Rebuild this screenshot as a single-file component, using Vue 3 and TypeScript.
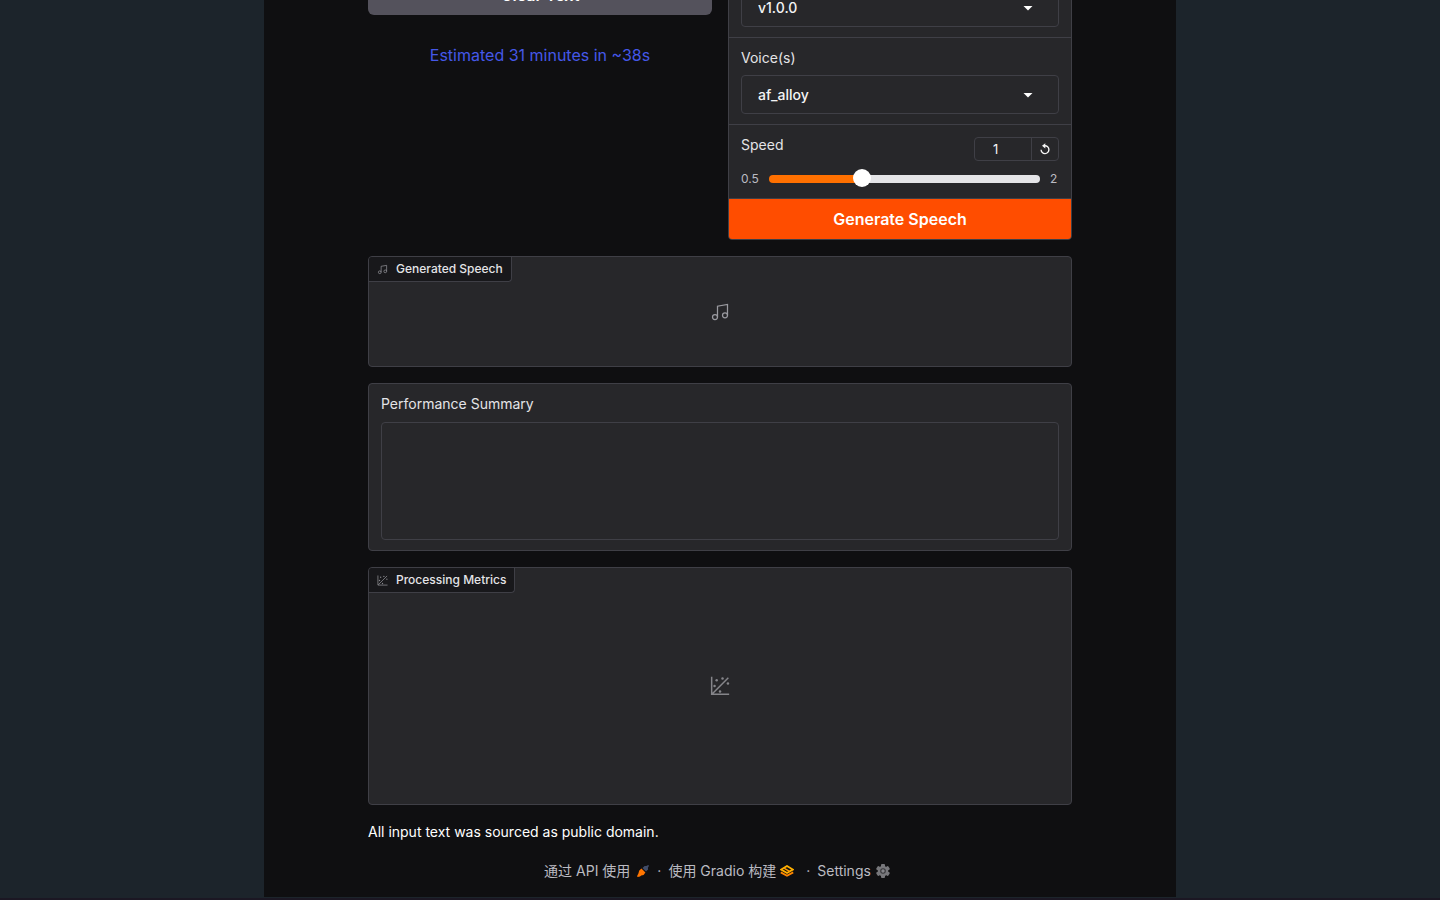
<script setup lang="ts">
import { computed, ref } from 'vue'

const model = ref('v1.0.0')
const voice = ref('af_alloy')
const speed = ref(1)
const summary = ref('')
const minSpeed = 0.5
const maxSpeed = 2

const fill = computed(() => {
  const ratio = (speed.value - minSpeed) / (maxSpeed - minSpeed)
  return `${(ratio * 100).toFixed(2)}%`
})

const plotDots = [
  [5.5, 12],
  [8, 5],
  [15, 3],
  [12, 18.5],
  [21.5, 9],
]
</script>

<template>
  <div class="page">
    <main class="app">
      <div class="content">
        <div class="columns">
          <section class="left">
            <button class="clear" type="button">Clear Text</button>
            <p class="estimate">Estimated 31 minutes in ~38s</p>
          </section>

          <section class="controls">
            <div class="field">
              <label for="model">Model Version</label>
              <div class="select-wrap">
                <select id="model" v-model="model">
                  <option>v1.0.0</option>
                </select>
                <svg class="caret" viewBox="0 0 18 18" aria-hidden="true"><path d="M4.500 7l4.500 4.500 4.500-4.500z" /></svg>
              </div>
            </div>
            <div class="field">
              <label for="voice">Voice(s)</label>
              <div class="select-wrap">
                <select id="voice" v-model="voice">
                  <option>af_alloy</option>
                </select>
                <svg class="caret" viewBox="0 0 18 18" aria-hidden="true"><path d="M4.500 7l4.500 4.500 4.500-4.500z" /></svg>
              </div>
            </div>
            <div class="field speed">
              <div class="speed-head">
                <label for="speed">Speed</label>
                <div class="number">
                  <input v-model.number="speed" type="number" aria-label="Speed value" min="0.5" max="2" step="0.1" />
                  <button type="button" aria-label="Reset speed" @click="speed = 1">
                    <svg viewBox="0 0 12 12" aria-hidden="true">
                      <path d="M5.8 2.800A3.900 3.900 0 1 1 2.100 6.700" fill="none" stroke="currentColor" stroke-width="1.400" />
                      <path d="M6.300.2v5.200L3 2.800z" fill="currentColor" />
                    </svg>
                  </button>
                </div>
              </div>
              <div class="range">
                <span>0.5</span>
                <input
                  id="speed"
                  v-model.number="speed"
                  type="range"
                  :min="minSpeed"
                  :max="maxSpeed"
                  step="0.1"
                  :style="{ '--fill': fill }"
                />
                <span>2</span>
              </div>
            </div>
            <button class="generate" type="button">Generate Speech</button>
          </section>
        </div>

        <section class="block audio">
          <h2 class="tag">
            <svg class="line-icon" viewBox="0 0 24 24" aria-hidden="true">
              <path d="M9 18V5l12-2v13" /><circle cx="6" cy="18" r="3" /><circle cx="18" cy="16" r="3" />
            </svg>
            Generated Speech
          </h2>
          <svg class="line-icon large" viewBox="0 0 24 24" aria-hidden="true">
            <path d="M9 18V5l12-2v13" /><circle cx="6" cy="18" r="3" /><circle cx="18" cy="16" r="3" />
          </svg>
        </section>

        <section class="block summary">
          <label for="summary">Performance Summary</label>
          <textarea id="summary" v-model="summary"></textarea>
        </section>

        <section class="block plot">
          <h2 class="tag">
            <svg class="plot-icon" viewBox="0 0 24 24" aria-hidden="true">
              <circle v-for="[x, y] in plotDots" :key="x" :cx="x" :cy="y" r="1.5" />
              <path d="M2 1v21h21M2.500 21.500L22 2" />
            </svg>
            Processing Metrics
          </h2>
          <svg class="plot-icon large" viewBox="0 0 24 24" aria-hidden="true">
            <circle v-for="[x, y] in plotDots" :key="x" :cx="x" :cy="y" r="1.5" />
            <path d="M2 1v21h21M2.500 21.500L22 2" />
          </svg>
        </section>

        <p class="note">All input text was sourced as public domain.</p>
      </div>

      <footer>
        <button type="button">
          通过 API 使用
          <svg class="rocket" viewBox="0 0 12 12" aria-hidden="true">
            <path d="M5.500 3L7.600.9l1.700.2L11.200 0l.8.800-1.100 1.900.2 1.700-2.100 2.100z" fill="#414c68" />
            <path d="M4.400 3.600l4 4-1.800 2.400-2.400.6-1.200.8-2.200.6L0 11.200l1-2 .5-1 .6-2.400z" fill="#ff7500" />
          </svg>
        </button>
        <span class="dot">·</span>
        <a href="#">
          使用 Gradio 构建
          <svg class="gradio" viewBox="0 0 14 12" aria-hidden="true">
            <path d="M.8 7.400L7 10.800l6.200-3.400" fill="none" stroke="#ff8500" stroke-width="1.800" />
            <path d="M7 1L12.800 4.600 7 8 1.200 4.600z" fill="none" stroke="#ffb000" stroke-width="1.800" />
            <path d="M4 3.200l5.500 3.200" fill="none" stroke="#ff9800" stroke-width="1.500" />
          </svg>
        </a>
        <span class="dot wide">·</span>
        <button type="button">
          Settings
          <svg class="gear" viewBox="0 0 14 14" aria-hidden="true">
            <g fill="#77777b">
              <rect v-for="a in [0, 60, 120]" :key="a" x="5" y="0" width="4" height="14" rx="1" :transform="`rotate(${a} 7 7)`" />
            </g>
            <circle cx="7" cy="7" r="4" fill="none" stroke="#77777b" stroke-width="2.500" />
            <circle cx="7" cy="7" r="2.800" fill="#37373b" /><circle cx="7" cy="7" r="1.700" fill="#85858a" />
          </svg>
        </button>
      </footer>
    </main>
  </div>
</template>

<style>
body {
  margin: 0;
  background: #1c242b;
}
</style>

<style scoped>
* {
  box-sizing: border-box;
}
.page {
  height: 100vh;
  overflow: hidden;
  display: flex;
  flex-direction: column;
  justify-content: flex-end;
  padding-bottom: 1px;
  border-bottom: 2px solid #1b1723;
  background: #1c242b;
  color: #f4f4f5;
  font: 14px/20px Inter, "Noto Sans CJK SC", sans-serif;
}
.app {
  flex: none;
  width: 100%;
  max-width: 912px;
  margin: 0 auto;
  padding: 0 104px 16px;
  background: #0f0f11;
}
.content {
  display: flex;
  flex-direction: column;
  gap: 16px;
}
button,
input,
select,
textarea {
  font: inherit;
  color: inherit;
  margin: 0;
}
button {
  cursor: pointer;
}
p,
h2 {
  margin: 0;
}
.columns {
  display: grid;
  grid-template-columns: 1fr 1fr;
  gap: 16px;
}
.left {
  display: flex;
  flex-direction: column;
  gap: 28px;
  padding-top: 25px;
}
.clear {
  height: 40px;
  border: 0;
  border-radius: 6px;
  background: #54525c;
  color: #fff;
  font-size: 16px;
  font-weight: 600;
}
.estimate {
  text-align: center;
  font-size: 16px;
  line-height: 24px;
  color: #4558e8;
}
.controls {
  display: flex;
  flex-direction: column;
  gap: 1px;
  overflow: hidden;
  border: 1px solid #3f3f46;
  border-radius: 4px;
  background: #3f3f46;
}
.field {
  padding: 10px 12px;
  background: #27272a;
}
.field label,
.summary label {
  display: block;
  color: #e4e4e7;
}
.select-wrap {
  position: relative;
  margin-top: 7px;
}
select {
  display: block;
  appearance: none;
  width: 100%;
  height: 39px;
  padding: 0 40px 0 16px;
  border: 1px solid #3f3f46;
  border-radius: 4px;
  background: #27272a;
  color: #f4f4f5;
  font-weight: 500;
}
.caret {
  position: absolute;
  right: 22px;
  top: 11px;
  width: 18px;
  height: 18px;
  fill: #fff;
  pointer-events: none;
}
.speed {
  padding: 12px 12px 9px;
}
.speed-head {
  display: flex;
  justify-content: space-between;
}
.speed-head label {
  line-height: 16px;
}
.number {
  display: flex;
  height: 24px;
  border: 1px solid #3f3f46;
  border-radius: 4px;
}
.number input {
  width: 56px;
  padding: 0 0 0 18px;
  border: 0;
  background: transparent;
  font-size: 13px;
  appearance: textfield;
}
.number input::-webkit-inner-spin-button {
  display: none;
}
.number button {
  display: grid;
  place-items: center;
  width: 27px;
  padding: 0;
  border: 0;
  border-left: 1px solid #3f3f46;
  background: transparent;
}
.number svg {
  width: 12px;
  height: 12px;
}
.range {
  display: flex;
  align-items: center;
  margin-top: 8px;
  height: 20px;
  font-size: 12px;
  color: #bbbbc2;
}
.range span:first-child {
  width: 28px;
}
.range span:last-child {
  width: 9px;
}
.range input {
  flex: 1;
  min-width: 0;
  height: 8px;
  margin-right: 10px;
  appearance: none;
  border-radius: 4px;
  background: linear-gradient(to right, #ff7000 var(--fill), #e4e4e7 var(--fill));
}
.range input::-webkit-slider-runnable-track {
  height: 8px;
}
.range input::-webkit-slider-thumb {
  appearance: none;
  width: 18px;
  height: 18px;
  margin-top: -6px;
  border-radius: 50%;
  background: #fff;
}
.generate {
  height: 40px;
  border: 0;
  background: #ff4d00;
  color: #fff;
  font-size: 16px;
  font-weight: 600;
}
.block {
  position: relative;
  border: 1px solid #3f3f46;
  border-radius: 4px;
  background: #27272a;
}
.audio,
.plot {
  display: grid;
  place-items: center;
}
.audio {
  height: 111px;
}
.plot {
  height: 238px;
}
.tag {
  position: absolute;
  top: 0;
  left: 0;
  display: flex;
  align-items: center;
  gap: 8px;
  height: 25px;
  padding: 0 8px;
  border: 1px solid #3f3f46;
  border-width: 0 1px 1px 0;
  border-radius: 3px 0 4px;
  background: #18181b;
  color: #e4e4e7;
  font-size: 12px;
  font-weight: 500;
}
.line-icon,
.plot-icon {
  width: 11px;
  height: 11px;
  fill: none;
  stroke: #9a9aa0;
  stroke-width: 1.5;
}
.plot-icon {
  stroke: #85858a;
  stroke-width: 1.8;
}
.plot-icon circle {
  fill: #85858a;
  stroke: none;
}
.large {
  width: 20px;
  height: 20px;
}
.summary {
  padding: 10px 12px;
}
textarea {
  display: block;
  width: 100%;
  height: 118px;
  margin-top: 8px;
  border: 1px solid #3f3f46;
  border-radius: 4px;
  background: #27272a;
  resize: none;
}
.note {
  line-height: 22px;
  color: #fff;
}
footer {
  display: flex;
  justify-content: center;
  align-items: center;
  margin-top: 18px;
  padding-right: 6px;
  height: 20px;
  color: #bbbbc2;
}
footer button,
footer a {
  display: flex;
  align-items: center;
  padding: 0;
  border: 0;
  background: none;
  color: inherit;
  text-decoration: none;
  white-space: nowrap;
}
.dot {
  margin: 0 7px 0 8px;
}
.dot.wide {
  margin-left: 12px;
}
.rocket {
  width: 12px;
  height: 12px;
  margin-left: 7px;
}
.gradio {
  width: 14px;
  height: 12px;
  margin-left: 4px;
}
.gear {
  width: 14px;
  height: 14px;
  margin-left: 5px;
}
</style>
